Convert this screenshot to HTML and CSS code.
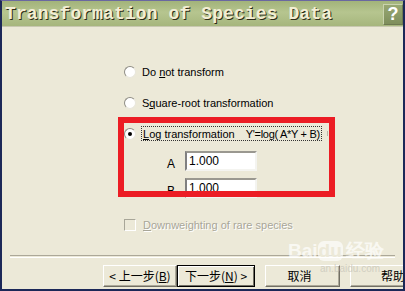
FILE: index.html
```html
<!DOCTYPE html>
<html>
    <head>
        <title>Transformation of Species Data</title>
        <link rel="stylesheet" href="styles.css">
    </head>
    <body>
        <div class="window">
            <div class="titleBar">
                <span class="titleText">Transformation of Species Data</span>
                <span class="helpBox">?</span>
            </div>
            <div class="dialogBody">
                <div class="options">
                    <div class="optRow">
                        <span class="radio"></span>
                        <span>Do <u>n</u>ot transform</span>
                    </div>
                    <div class="optRow">
                        <span class="radio"></span>
                        <span>S<u>q</u>uare-root transformation</span>
                    </div>
                    <div class="optRow">
                        <span class="radio checked"></span>
                        <span class="focusRect">
                            <span><u>L</u>og transformation</span>
                            <span class="formula">Y'=log( A*Y + B)</span>
                        </span>
                        <span class="stray"></span>
                    </div>
                    <div class="paramRow paramA">
                        <label>A</label>
                        <input class="numBox" type="text" value="1.000">
                    </div>
                    <div class="paramRow paramB">
                        <label>B</label>
                        <input class="numBox" type="text" value="1.000">
                    </div>
                    <div class="checkRow">
                        <span class="checkBox"></span>
                        <span><u>D</u>ownweighting of rare species</span>
                    </div>
                </div>
                <div class="separator"></div>
                <div class="buttonRow">
                    <div class="btn btnBack">&lt; 上一步(<u>B</u>)</div>
                    <div class="btn btnNext">下一步(<u>N</u>) &gt;</div>
                    <div class="btn btnCancel">取消</div>
                    <div class="btn btnHelp">帮助</div>
                </div>
            </div>
            <div class="highlight"></div>
            <div class="watermark">
                <span class="wmLogo">Bai<span class="wmDu">du</span>经验</span>
                <span class="wmUrl">an.baidu.com</span>
            </div>
        </div>
    </body>
</html>
```

FILE: styles.css
```css
html, body {
    margin: 0;
    padding: 0;
    width: 405px;
    height: 291px;
    overflow: hidden;
}
.window {
    position: relative;
    box-sizing: border-box;
    width: 405px;
    height: 291px;
    border-left: 2px solid #1c2858;
    border-right: 2px solid #1c2858;
    border-bottom: 2px solid #1c2858;
    border-top: 1px solid #6a68a0;
    background-color: #ece9d8;
    font-family: "Liberation Sans", Arial, sans-serif;
    font-size: 11px;
    color: #000;
    overflow: hidden;
}
.titleBar {
    height: 25px;
    display: flex;
    align-items: center;
    justify-content: space-between;
    padding-left: 3px;
    background: linear-gradient(#a2b37a, #b6c58f 45%, #a6b67d);
    border-bottom: 1px solid #c8c8b0;
}
.titleText {
    font-family: "Liberation Mono", "Courier New", monospace;
    font-weight: bold;
    font-size: 18px;
    color: #f2eed4;
    text-shadow: 1px 1px 0 #2c2c18;
    letter-spacing: 0.1px;
}
.helpBox {
    width: 20px;
    height: 21px;
    margin-top: 1px;
    box-sizing: border-box;
    border: 1px solid #c9d3ad;
    border-right-color: #6e7a52;
    border-bottom-color: #6e7a52;
    background: linear-gradient(#98a872, #7e8e5c);
    color: #fff;
    font-family: "Liberation Sans", Arial, sans-serif;
    font-weight: bold;
    font-size: 18px;
    line-height: 19px;
    text-align: center;
}
.dialogBody {
    display: flex;
    flex-direction: column;
}
.options {
    margin-top: 29px;
    padding-left: 122px;
}
.optRow {
    height: 31px;
    display: flex;
    align-items: center;
}
.radio {
    width: 12px;
    height: 12px;
    box-sizing: border-box;
    border-radius: 50%;
    border: 1px solid #8e8c84;
    border-right-color: #e8e6dc;
    border-bottom-color: #e8e6dc;
    background-color: #fff;
    margin-right: 6px;
    position: relative;
}
.radio.checked::after {
    content: "";
    position: absolute;
    left: 3px;
    top: 3px;
    width: 4px;
    height: 4px;
    border-radius: 50%;
    background-color: #000;
}
.focusRect {
    display: flex;
    align-items: center;
    height: 13px;
    padding: 0 1px;
    margin-left: -1px;
    border: 1px dotted #333;
}
.formula {
    margin-left: 11px;
    letter-spacing: -0.3px;
}
.stray {
    width: 1px;
    height: 5px;
    margin-left: 5px;
    background-color: #b8b6a8;
}
.paramRow {
    display: flex;
    align-items: center;
    height: 20px;
    padding-left: 43px;
}
.paramRow label {
    width: 18px;
    font-size: 12px;
    padding-top: 5px;
}
.paramA {
    margin-top: 2px;
}
.paramB {
    margin-top: 7px;
}
.numBox {
    width: 72px;
    height: 20px;
    box-sizing: border-box;
    margin: 0;
    padding: 0 2px;
    border: 2px solid #808080;
    border-right-color: #f4f4f0;
    border-bottom-color: #f4f4f0;
    border-top-color: #9a9890;
    background-color: #fff;
    font-family: "Liberation Sans", Arial, sans-serif;
    font-size: 12px;
    color: #000;
}
.checkRow {
    display: flex;
    align-items: center;
    height: 14px;
    margin-top: 20px;
    color: #a8a698;
    text-shadow: 1px 1px 0 #fff;
}
.checkBox {
    width: 12px;
    height: 12px;
    box-sizing: border-box;
    border: 1px solid #a8a698;
    border-right-color: #fff;
    border-bottom-color: #fff;
    margin-right: 7px;
}
.separator {
    margin: 23px 8px 0 8px;
    height: 1px;
    border-top: 1px solid #aca899;
    border-bottom: 1px solid #fff;
}
.buttonRow {
    display: flex;
    margin-top: 7px;
    padding-left: 101px;
    font-family: "Noto Sans CJK SC", sans-serif;
    font-size: 12px;
}
.btn {
    flex-shrink: 0;
    height: 22px;
    box-sizing: border-box;
    border: 1px solid #fff;
    border-right-color: #716f64;
    border-bottom-color: #716f64;
    box-shadow: inset -1px -1px 0 #aca899;
    background-color: #ece9d8;
    display: flex;
    align-items: center;
    justify-content: center;
    line-height: 1;
}
.btnBack {
    width: 74px;
}
.btnNext {
    width: 78px;
    border: 1px solid #000;
    box-shadow: inset 1px 1px 0 #fff, inset -1px -1px 0 #716f64;
}
.btnCancel {
    width: 75px;
    margin-left: 10px;
    padding-right: 6px;
}
.btnHelp {
    width: 75px;
    margin-left: 10px;
    justify-content: flex-start;
    padding-left: 30px;
}
.highlight {
    position: absolute;
    left: 116px;
    top: 116px;
    width: 217px;
    height: 80px;
    box-sizing: border-box;
    border: 6px solid #ec1c24;
}
.watermark {
    position: absolute;
    left: 286px;
    top: 240px;
    display: flex;
    flex-direction: column;
    color: rgba(255, 255, 255, 0.7);
}
.wmLogo {
    font-family: "Liberation Sans", Arial, sans-serif;
    font-weight: bold;
    font-size: 19px;
    line-height: 20px;
}
.wmDu {
    display: inline-block;
    background-color: rgba(255, 255, 255, 0.65);
    color: #ece9d8;
    border-radius: 6px;
    padding: 0 1px;
    margin-right: 3px;
}
.wmUrl {
    font-size: 10px;
    color: rgba(196, 194, 182, 0.7);
    margin-top: 2px;
    margin-left: 32px;
}
```
